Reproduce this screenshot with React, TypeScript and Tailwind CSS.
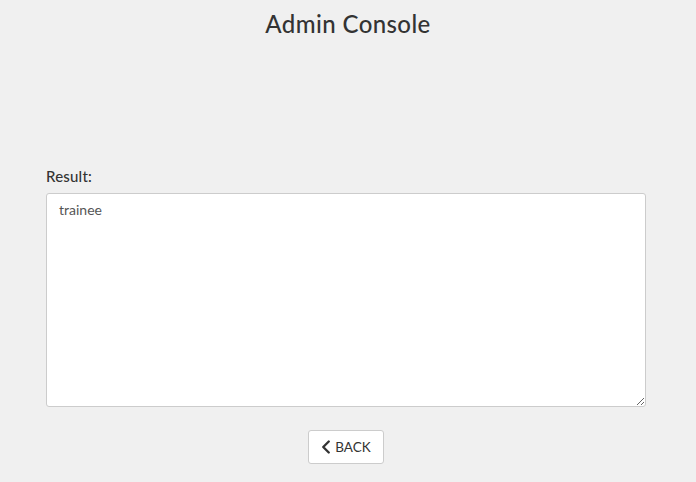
import { ChevronLeft } from 'lucide-react';

export default function App() {
  return (
    <div className="min-h-[482px] w-full bg-[#f0f0f0] text-[#333] font-['Lato','Liberation_Sans',sans-serif]">
      <h1 className="pt-[9px] text-center text-[24px] leading-[30px] font-medium tracking-[0.4px] text-[#333]">Admin Console</h1>
      <div className="ml-[46px] mr-[50px] mt-[127px]">
        <label className="block text-[15px] leading-[20px] font-medium tracking-[0.2px] text-[#333] mb-[7px]">Result:</label>
        <textarea
          readOnly
          defaultValue="trainee"
          className="block w-full h-[214px] rounded-[3px] border border-[#cccccc] bg-white px-[12px] py-[6px] text-[14px] leading-[20px] text-[#555] outline-none resize-y"
        />
        <div className="flex justify-center mt-[23px]">
          <button className="flex items-center h-[34px] w-[76px] justify-center gap-0 rounded-[3px] border border-[#cccccc] bg-white text-[13.5px] text-[#333]">
            <ChevronLeft size={22} strokeWidth={2.6} className="-ml-[6px] -mr-[2px]" />
            BACK
          </button>
        </div>
      </div>
    </div>
  );
}
